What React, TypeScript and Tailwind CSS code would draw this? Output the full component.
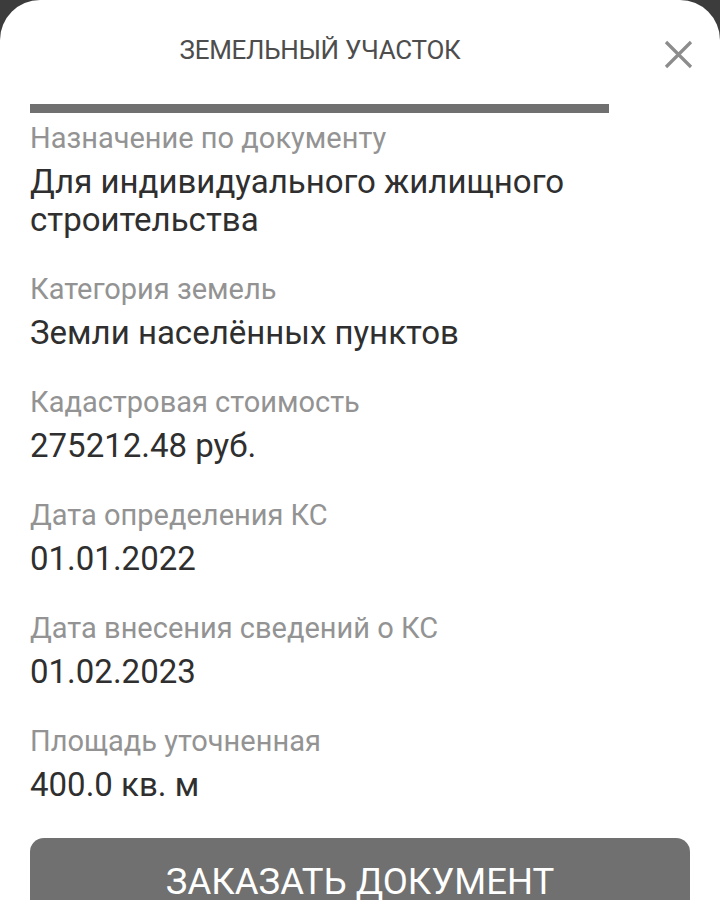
import React from "react";

const items: { label: string; value: string[] }[] = [
  { label: "Назначение по документу", value: ["Для индивидуального жилищного", "строительства"] },
  { label: "Категория земель", value: ["Земли населённых пунктов"] },
  { label: "Кадастровая стоимость", value: ["275212.48 руб."] },
  { label: "Дата определения КС", value: ["01.01.2022"] },
  { label: "Дата внесения сведений о КС", value: ["01.02.2023"] },
  { label: "Площадь уточненная", value: ["400.0 кв. м"] },
];

export default function App() {
  return (
    <div className="h-[900px] w-[720px] overflow-hidden bg-[#3c3c3c]" style={{ fontFamily: "Roboto, 'Noto Sans', sans-serif" }}>
      <div className="h-full bg-white rounded-t-[40px]">
        <div className="relative h-[104px] flex items-start justify-center pr-[80px]">
          <div className="mt-[35px] text-[26px] leading-[30px] text-[#4d4d4d] tracking-[-0.3px]">ЗЕМЕЛЬНЫЙ УЧАСТОК</div>
          <svg className="absolute left-[664px] top-[40px]" width="29" height="29" viewBox="0 0 29 29">
            <path d="M2 2 L27 27 M27 2 L2 27" stroke="#8c8c8c" strokeWidth="3.2" strokeLinecap="butt" />
          </svg>
        </div>
        <div className="ml-[30px] w-[579px] h-[9px] bg-[#707070]" />
        <div className="px-[30px] flex flex-col">
          {items.map((it, i) => (
            <div key={i} className={i === 0 ? "mt-[7px]" : "mt-[32px]"}>
              <div className="text-[29px] leading-[36px] text-[#939393]">{it.label}</div>
              <div className="mt-[7px] text-[33px] leading-[38px] text-[#2f2f2f]">
                {it.value.map((v, j) => (
                  <div key={j}>{v}</div>
                ))}
              </div>
            </div>
          ))}
        </div>
        <div className="mx-[30px] mt-[34px] h-[100px] rounded-[14px] bg-[#707070] flex items-start justify-center">
          <div className="mt-[22px] text-[36.5px] leading-[44px] text-white">ЗАКАЗАТЬ ДОКУМЕНТ</div>
        </div>
      </div>
    </div>
  );
}
